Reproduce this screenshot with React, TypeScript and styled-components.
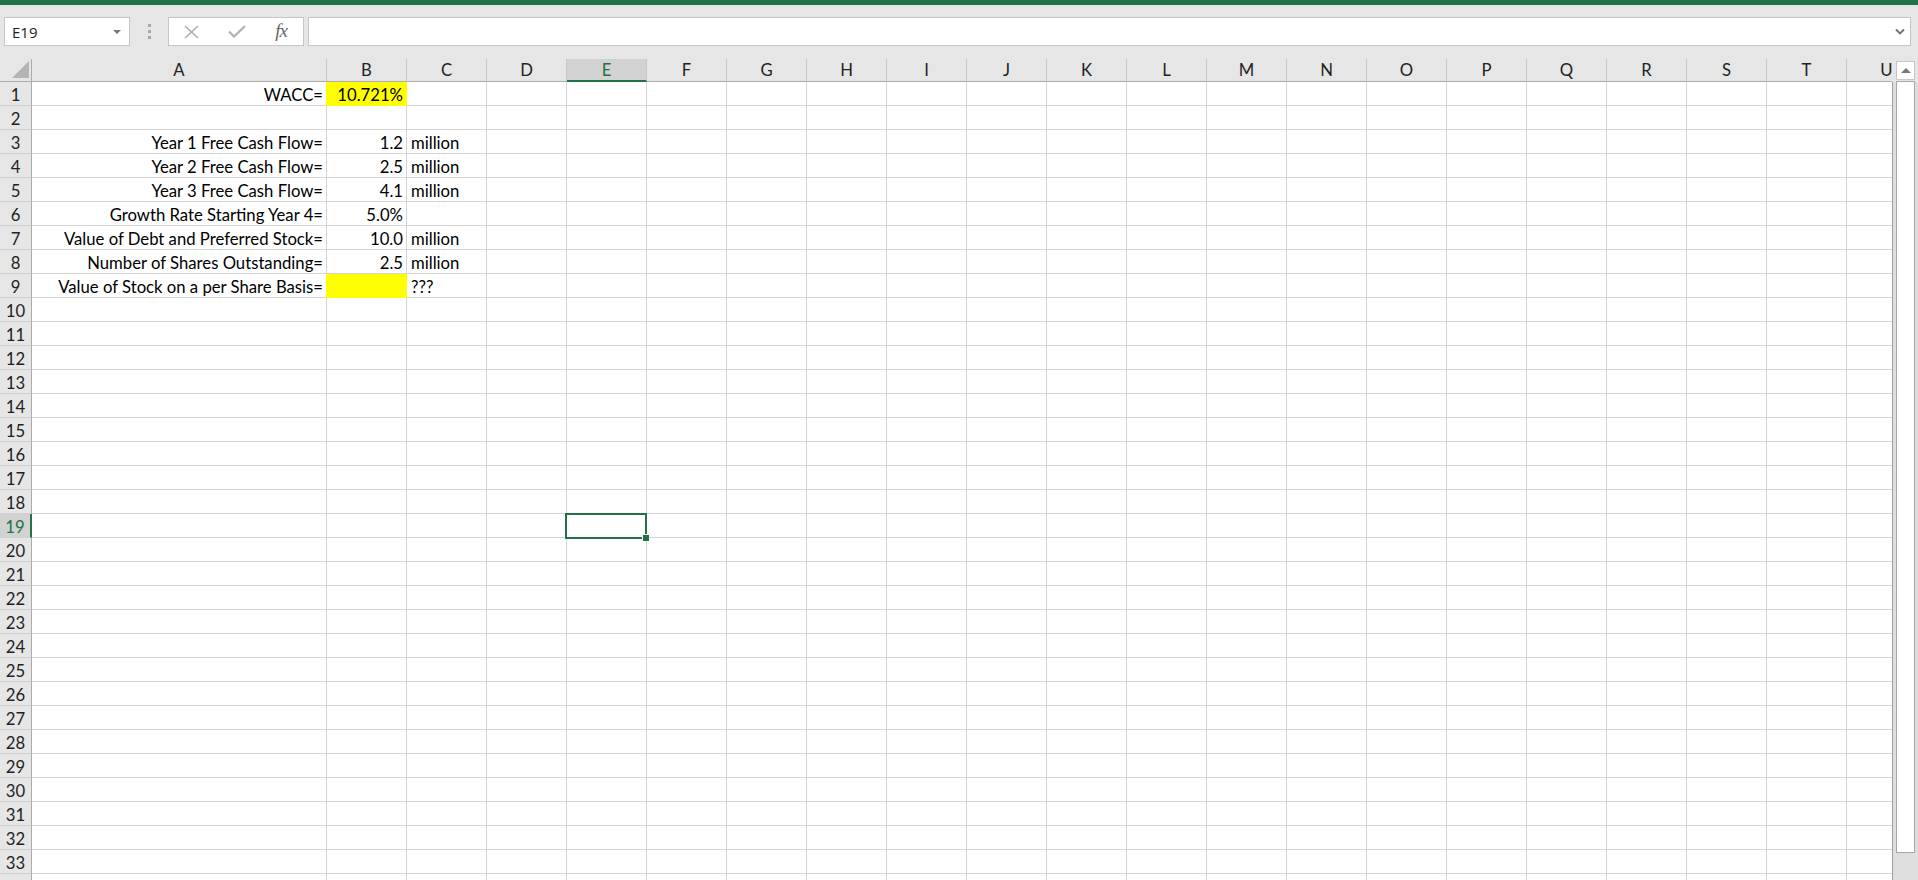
import React from "react";
import styled, { createGlobalStyle, css } from "styled-components";

const GREEN = "#217346";
const GRID = "#d4d4d4";
const HEAD_BG = "#e6e6e6";
const FONT = `Lato, "Open Sans", "Liberation Sans", sans-serif`;

const Global = createGlobalStyle`
  html, body { margin: 0; padding: 0; background: ${HEAD_BG}; overflow: hidden; }
  body { width: 1918px; height: 880px; font-family: ${FONT}; }
  * { box-sizing: border-box; }
`;

const Page = styled.div`
  width: 1918px;
  height: 880px;
  display: flex;
  flex-direction: column;
  background: ${HEAD_BG};
`;

const TitleStrip = styled.div`
  height: 5px;
  background: ${GREEN};
  flex: none;
`;

const FormulaBar = styled.div`
  height: 54px;
  flex: none;
  display: flex;
  align-items: flex-start;
  padding: 12px 7px 0 4px;
`;

const NameBox = styled.div`
  width: 126px;
  height: 29px;
  background: #fff;
  border: 1px solid #c6c6c6;
  display: flex;
  align-items: center;
  justify-content: space-between;
  padding: 0 8px 0 7px;
  font-family: "Open Sans", "Noto Sans", sans-serif;
  font-size: 15px;
  color: #222;
`;

const DropTri = styled.span`
  width: 0;
  height: 0;
  border-left: 4px solid transparent;
  border-right: 4px solid transparent;
  border-top: 4px solid #777;
  margin-top: 1px;
`;

const VDots = styled.div`
  width: 3px;
  height: 29px;
  margin: 0 17px 0 18px;
  display: flex;
  flex-direction: column;
  justify-content: center;
  gap: 3px;
`;

const Dot = styled.span`
  width: 3px;
  height: 3px;
  background: #a8a8a8;
`;

const FxBox = styled.div`
  width: 136px;
  height: 29px;
  background: #fff;
  border: 1px solid #c6c6c6;
  display: flex;
  align-items: center;
  padding-left: 14px;
`;

const IconSlot = styled.span<{ $w: number; $gap?: number }>`
  width: ${(p) => p.$w}px;
  margin-right: ${(p) => p.$gap ?? 0}px;
  display: flex;
  align-items: center;
  justify-content: center;
`;

const FxText = styled.span`
  font-family: "Liberation Serif", "DejaVu Serif", serif;
  font-style: italic;
  font-size: 19px;
  color: #666;
  letter-spacing: -1px;
  line-height: 1;
  margin-top: -2px;
`;

const FormulaInput = styled.div`
  flex: 1;
  height: 29px;
  margin-left: 4px;
  background: #fff;
  border: 1px solid #c6c6c6;
  display: flex;
  align-items: center;
  justify-content: flex-end;
  padding-right: 5px;
`;

const Workspace = styled.div`
  flex: 1;
  display: flex;
  min-height: 0;
`;

const Sheet = styled.div`
  width: 1892px;
  height: 100%;
  overflow: hidden;
  flex: none;
`;

const SheetGrid = styled.div`
  display: grid;
  grid-template-columns: 32px 295px repeat(20, 80px);
  grid-auto-rows: 24px;
  grid-template-rows: 23px;
  font-family: ${FONT};
  font-size: 16.7px;
  color: #000;
`;

const Corner = styled.div`
  background: ${HEAD_BG};
  border-right: 1px solid #ababab;
  border-bottom: 1px solid #ababab;
  display: flex;
  align-items: flex-end;
  justify-content: flex-end;
  padding: 0 2px 3px 0;
`;

const ColHead = styled.div<{ $sel?: boolean }>`
  background: ${(p) => (p.$sel ? "#d2d2d2" : HEAD_BG)};
  color: ${(p) => (p.$sel ? GREEN : "#222")};
  border-right: 1px solid #c8c8c8;
  border-bottom: ${(p) => (p.$sel ? `2px solid ${GREEN}` : "1px solid #ababab")};
  display: flex;
  align-items: center;
  justify-content: center;
  line-height: 1;
  padding-top: ${(p) => (p.$sel ? 1 : 0)}px;
  white-space: nowrap;
`;

const RowHead = styled.div<{ $sel?: boolean }>`
  background: ${(p) => (p.$sel ? "#d2d2d2" : HEAD_BG)};
  color: ${(p) => (p.$sel ? GREEN : "#222")};
  border-right: ${(p) => (p.$sel ? `2px solid ${GREEN}` : "1px solid #ababab")};
  border-bottom: 1px solid #d0d0d0;
  text-align: center;
  line-height: 19px;
  padding-top: 4px;
`;

const Cell = styled.div<{ $align?: "left" | "right"; $fill?: string }>`
  position: relative;
  background: ${(p) => p.$fill ?? "#fff"};
  border-right: 1px solid ${(p) => p.$fill ?? GRID};
  border-bottom: 1px solid ${(p) => p.$fill ?? GRID};
  text-align: ${(p) => p.$align ?? "left"};
  line-height: 19px;
  padding: 4px 4px 0 4px;
  white-space: nowrap;
  ${(p) =>
    p.$align === "right" &&
    css`
      padding-right: 3px;
    `}
  ${(p) =>
    p.$fill &&
    css`
      box-shadow: -1px 0 0 ${p.$fill};
    `}
`;

const SelectionBox = styled.div`
  position: absolute;
  z-index: 3;
  left: -2px;
  top: -1px;
  width: 82px;
  height: 26px;
  border: 2px solid ${GREEN};
  pointer-events: none;
`;

const FillHandle = styled.div`
  position: absolute;
  right: -4px;
  bottom: -4px;
  width: 7px;
  height: 7px;
  background: ${GREEN};
  border-top: 1px solid #fff;
  border-left: 1px solid #fff;
`;

const VScroll = styled.div`
  width: 26px;
  flex: none;
  display: flex;
  flex-direction: column;
  background: ${HEAD_BG};
`;

const ScrollHead = styled.div`
  height: 23px;
  flex: none;
  padding: 2px 0 0 4px;
`;

const ArrowBtn = styled.div`
  width: 19px;
  height: 19px;
  background: #fff;
  border: 1px solid #c6c6c6;
  display: flex;
  align-items: center;
  justify-content: center;
`;

const UpTri = styled.span`
  width: 0;
  height: 0;
  border-left: 5px solid transparent;
  border-right: 5px solid transparent;
  border-bottom: 5px solid #777;
  margin-top: -1px;
`;

const ScrollTrack = styled.div`
  flex: 1;
  border-left: 1px solid #a0a0a0;
  background: #dedede;
  padding: 0 0 0 3px;
`;

const Thumb = styled.div`
  width: 19px;
  height: 772px;
  margin-top: -1px;
  background: #fff;
  border: 1px solid #a6a6a6;
`;

type CellData = { a?: string; b?: string; c?: string; bFill?: boolean };

const DATA: Record<number, CellData> = {
  1: { a: "WACC=", b: "10.721%", bFill: true },
  3: { a: "Year 1 Free Cash Flow=", b: "1.2", c: "million" },
  4: { a: "Year 2 Free Cash Flow=", b: "2.5", c: "million" },
  5: { a: "Year 3 Free Cash Flow=", b: "4.1", c: "million" },
  6: { a: "Growth Rate Starting Year 4=", b: "5.0%" },
  7: { a: "Value of Debt and Preferred Stock=", b: "10.0", c: "million" },
  8: { a: "Number of Shares Outstanding=", b: "2.5", c: "million" },
  9: { a: "Value of Stock on a per Share Basis=", bFill: true, c: "???" },
};

const COLS = "ABCDEFGHIJKLMNOPQRSTU".split("");
const ROWS = Array.from({ length: 34 }, (_, i) => i + 1);
const SEL_COL = "E";
const SEL_ROW = 19;

function CrossIcon() {
  return (
    <svg width="15" height="14" viewBox="0 0 15 14">
      <path d="M1 1 L14 13 M14 1 L1 13" stroke="#a9a9a9" strokeWidth="1.4" fill="none" />
    </svg>
  );
}

function CheckIcon() {
  return (
    <svg width="18" height="13" viewBox="0 0 18 13">
      <path d="M1 6.5 L6 11.5 L17 1" stroke="#b3b3b3" strokeWidth="2.4" fill="none" />
    </svg>
  );
}

function ChevronDown() {
  return (
    <svg width="10" height="7" viewBox="0 0 10 7">
      <path d="M1 1.5 L5 5.5 L9 1.5" stroke="#6f6f6f" strokeWidth="1.8" fill="none" />
    </svg>
  );
}

function CornerTri() {
  return (
    <svg width="17" height="17" viewBox="0 0 17 17">
      <path d="M17 0 L17 17 L0 17 Z" fill="#b4b4b4" />
    </svg>
  );
}

export default function App() {
  return (
    <Page>
      <Global />
      <TitleStrip />
      <FormulaBar>
        <NameBox>
          <span>E19</span>
          <DropTri />
        </NameBox>
        <VDots>
          <Dot />
          <Dot />
          <Dot />
        </VDots>
        <FxBox>
          <IconSlot $w={16} $gap={29}>
            <CrossIcon />
          </IconSlot>
          <IconSlot $w={18} $gap={26}>
            <CheckIcon />
          </IconSlot>
          <IconSlot $w={18}>
            <FxText>fx</FxText>
          </IconSlot>
        </FxBox>
        <FormulaInput>
          <ChevronDown />
        </FormulaInput>
      </FormulaBar>
      <Workspace>
        <Sheet>
          <SheetGrid>
            <Corner>
              <CornerTri />
            </Corner>
            {COLS.map((c) => (
              <ColHead key={c} $sel={c === SEL_COL}>
                {c}
              </ColHead>
            ))}
            {ROWS.map((r) => {
              const d = DATA[r] ?? {};
              return (
                <React.Fragment key={r}>
                  <RowHead $sel={r === SEL_ROW}>{r}</RowHead>
                  {COLS.map((c) => {
                    if (c === "A")
                      return (
                        <Cell key={c} $align="right">
                          {d.a}
                        </Cell>
                      );
                    if (c === "B")
                      return (
                        <Cell key={c} $align="right" $fill={d.bFill ? "#ffff00" : undefined}>
                          {d.b}
                        </Cell>
                      );
                    if (c === "C") return <Cell key={c}>{d.c}</Cell>;
                    const selected = c === SEL_COL && r === SEL_ROW;
                    return (
                      <Cell key={c}>
                        {selected && (
                          <SelectionBox>
                            <FillHandle />
                          </SelectionBox>
                        )}
                      </Cell>
                    );
                  })}
                </React.Fragment>
              );
            })}
          </SheetGrid>
        </Sheet>
        <VScroll>
          <ScrollHead>
            <ArrowBtn>
              <UpTri />
            </ArrowBtn>
          </ScrollHead>
          <ScrollTrack>
            <Thumb />
          </ScrollTrack>
        </VScroll>
      </Workspace>
    </Page>
  );
}
